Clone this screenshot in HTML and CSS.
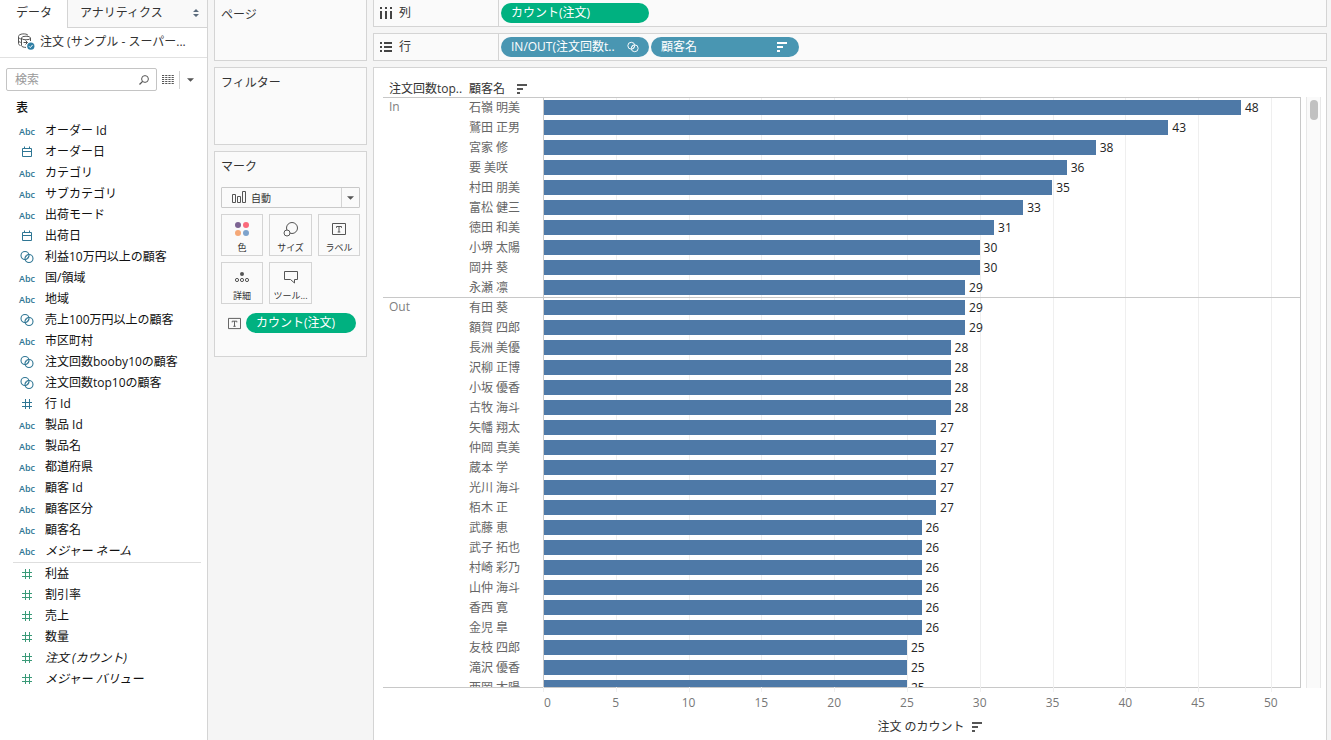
FILE: index.html
```html
<!DOCTYPE html>
<html lang="ja">
<head>
<meta charset="utf-8">
<meta name="viewport" content="width=device-width, initial-scale=1">
<title>注文回数 上位の顧客</title>
<link rel="stylesheet" href="styles.css">
</head>
<body>
<svg class="sprite" aria-hidden="true">
  <symbol id="i-date" viewBox="0 0 14 14"><path d="M2.500 3.500h9v8h-9zM2.500 6.500h9M4.500 1.500v2M9.500 1.500v2" fill="none" stroke="currentColor"/></symbol>
  <symbol id="i-set" viewBox="0 0 14 14"><g fill="none" stroke="currentColor" stroke-width="1.100"><circle cx="5" cy="5.500" r="4"/><circle cx="9" cy="8.500" r="4"/><path d="M5.300 7.600l2.200-2.600M6.600 9l2.400-3" stroke-width=".8"/></g></symbol>
  <symbol id="i-num" viewBox="0 0 14 14"><path d="M5.500 2v10M9.500 2v10M2 5.500h10M2 9.500h10" fill="none" stroke="currentColor"/></symbol>
  <symbol id="i-sort" viewBox="0 0 10 10"><path d="M0 1h10M0 5h6M0 9h3" fill="none" stroke="currentColor" stroke-width="2"/></symbol>
  <symbol id="i-text" viewBox="0 0 14 14"><path d="M.5 1.500h13v11h-13z" fill="none" stroke="currentColor"/><path d="M4.500 5.800v-1.300h5v1.300M7 4.500v5.500M5.700 10h2.600" fill="none" stroke="currentColor"/></symbol>
  <symbol id="i-down" viewBox="0 0 8 4"><path d="M0 0h8l-4 4z" fill="currentColor"/></symbol>
</svg>
<div class="app">
  <aside class="sidebar">
    <div class="tabs">
      <button class="tab active" type="button">データ</button>
      <button class="tab" type="button">アナリティクス
        <svg width="6" height="8" viewBox="0 0 6 8"><path d="M0 3h6l-3-3zM0 5h6l-3 3z" fill="#5b6b7c"/></svg>
      </button>
    </div>
    <div class="source">
      <svg width="18" height="18" viewBox="0 0 18 18"><g fill="none" stroke="#555"><path d="M2.500 12.500c-1.300-.4-2-1-2-2v-7c0-3 8-3.500 9.500-1.200M.7 4.500c.5 1 1.500 1.400 2.800 1.500M.6 8c.5 1 1.400 1.300 2.300 1.400"/><ellipse cx="8" cy="5" rx="4.500" ry="1.800"/><path d="M3.500 5v7.500c0 1.200 2.200 1.900 4.500 1.900M12.500 5v3M5.500 9.500h4M7.500 7.500l2 2-2 2"/></g><circle cx="12.800" cy="13.200" r="4.200" fill="#fff"/><circle cx="12.800" cy="13.200" r="3.600" fill="#2f7fa5"/><path d="M11 13.300l1.300 1.300 2.300-2.700" fill="none" stroke="#fff"/></svg>
      <span>注文 (サンプル - スーパー...</span>
    </div>
    <div class="search-row">
      <label class="search">
        <input type="text" placeholder="検索" aria-label="検索">
        <svg width="10" height="10" viewBox="0 0 10 10"><circle cx="6" cy="4" r="3.400" fill="none" stroke="#555"/><path d="M3.600 6.400l-3.100 3.100" stroke="#555" stroke-width="1.300"/></svg>
      </label>
      <button class="plain view" type="button" aria-label="表示"><svg width="12" height="9" viewBox="0 0 12 9"><path d="M0 .5h12M0 2.500h12M0 4.500h12M0 6.500h12M0 8.500h12" stroke="#555" stroke-dasharray="2.200 1" stroke-width="1"/></svg></button>
      <button class="plain more" type="button" aria-label="メニュー"><svg width="7" height="4"><use href="#i-down"/></svg></button>
    </div>
    <h2 class="group-title">表</h2>
    <ul class="fields">
      <li><b>Abc</b>オーダー Id</li>
      <li><svg><use href="#i-date"/></svg>オーダー日</li>
      <li><b>Abc</b>カテゴリ</li>
      <li><b>Abc</b>サブカテゴリ</li>
      <li><b>Abc</b>出荷モード</li>
      <li><svg><use href="#i-date"/></svg>出荷日</li>
      <li><svg><use href="#i-set"/></svg>利益10万円以上の顧客</li>
      <li><b>Abc</b>国/領域</li>
      <li><b>Abc</b>地域</li>
      <li><svg><use href="#i-set"/></svg>売上100万円以上の顧客</li>
      <li><b>Abc</b>市区町村</li>
      <li><svg><use href="#i-set"/></svg>注文回数booby10の顧客</li>
      <li><svg><use href="#i-set"/></svg>注文回数top10の顧客</li>
      <li><svg><use href="#i-num"/></svg>行 Id</li>
      <li><b>Abc</b>製品 Id</li>
      <li><b>Abc</b>製品名</li>
      <li><b>Abc</b>都道府県</li>
      <li><b>Abc</b>顧客 Id</li>
      <li><b>Abc</b>顧客区分</li>
      <li><b>Abc</b>顧客名</li>
      <li><b>Abc</b><em>メジャー ネーム</em></li>
    </ul>
    <ul class="fields measures">
      <li><svg><use href="#i-num"/></svg>利益</li>
      <li><svg><use href="#i-num"/></svg>割引率</li>
      <li><svg><use href="#i-num"/></svg>売上</li>
      <li><svg><use href="#i-num"/></svg>数量</li>
      <li><svg><use href="#i-num"/></svg><em>注文 (カウント)</em></li>
      <li><svg><use href="#i-num"/></svg><em>メジャー バリュー</em></li>
    </ul>
  </aside>

  <section class="cards">
    <div class="card pages"><h2>ページ</h2></div>
    <div class="card filters"><h2>フィルター</h2></div>
    <div class="card marks">
      <h2>マーク</h2>
      <div class="mark-type">
        <svg class="bars-icon" width="14" height="12" viewBox="0 0 14 12"><path d="M.5 3.500h3v8h-3zM5.500 5.500h3v6h-3zM10.500 .5h3v11h-3z" fill="none" stroke="#555"/></svg>
        <select aria-label="マークの種類"><option>自動</option></select>
        <span class="arrow"><svg width="7" height="4"><use href="#i-down"/></svg></span>
      </div>
      <div class="mark-grid">
        <button type="button"><svg width="16" height="16" viewBox="0 0 16 16"><circle cx="4" cy="4" r="3" fill="#7d6493"/><circle cx="12" cy="4" r="3" fill="#fb6a7b"/><circle cx="4" cy="12" r="3" fill="#f5a877"/><circle cx="12" cy="12" r="3" fill="#7da3cc"/></svg>色</button>
        <button type="button"><svg width="16" height="16" viewBox="0 0 16 16"><g fill="#fafafa" stroke="#555"><circle cx="9" cy="7" r="5.500"/><circle cx="4" cy="12" r="3"/></g></svg>サイズ</button>
        <button type="button"><svg width="14" height="16"><use href="#i-text"/></svg>ラベル</button>
        <button type="button"><svg width="16" height="16" viewBox="0 0 16 16"><circle cx="8" cy="5" r="2" fill="#555"/><g fill="none" stroke="#555"><circle cx="3" cy="11" r="1.600"/><circle cx="8" cy="11" r="1.600"/><circle cx="13" cy="11" r="1.600"/></g></svg>詳細</button>
        <button type="button"><svg width="16" height="16" viewBox="0 0 16 16"><path d="M1.500 2.500h13v8h-3v3.500l-4-3.500h-6z" fill="none" stroke="#555"/></svg>ツール...</button>
      </div>
      <div class="mark-pill">
        <svg width="13" height="13"><use href="#i-text"/></svg>
        <button class="pill green" type="button"><span>カウント(注文)</span></button>
      </div>
    </div>
  </section>

  <main class="work">
    <div class="shelf columns">
      <h2><svg width="12" height="12" viewBox="0 0 12 12"><path d="M1 0v2M1 4v8M6 0v2M6 4v8M11 0v2M11 4v8" stroke="#444" stroke-width="2"/></svg>列</h2>
      <div class="pills"><button class="pill green" type="button"><span>カウント(注文)</span></button></div>
    </div>
    <div class="shelf rows">
      <h2><svg width="12" height="12" viewBox="0 0 12 12"><path d="M0 2h2M4 2h8M0 6h2M4 6h8M0 10h2M4 10h8" stroke="#444" stroke-width="2"/></svg>行</h2>
      <div class="pills">
        <button class="pill blue" type="button"><span>IN/OUT(注文回数t..</span><svg width="12" height="12"><use href="#i-set"/></svg></button>
        <button class="pill blue name" type="button"><span>顧客名</span><svg width="10" height="10"><use href="#i-sort"/></svg></button>
      </div>
    </div>
    <div class="sheet">
      <div class="heads"><span>注文回数top..</span><span>顧客名</span><svg width="10" height="10"><use href="#i-sort"/></svg></div>
      <div class="plot-row">
        <div class="plot">
          <div class="gridlines"><i></i><i></i><i></i><i></i><i></i><i></i><i></i><i></i><i></i><i></i><i></i></div>
          <div class="viewport">
            <table>
              <colgroup><col class="c-set"><col class="c-name"><col></colgroup>
              <tbody>
                <tr><th rowspan="10" scope="rowgroup">In</th><td>石嶺 明美</td><td class="v"><div><i style="--v:48"></i>48</div></td></tr>
                <tr><td>鷲田 正男</td><td class="v"><div><i style="--v:43"></i>43</div></td></tr>
                <tr><td>宮家 修</td><td class="v"><div><i style="--v:38"></i>38</div></td></tr>
                <tr><td>要 美咲</td><td class="v"><div><i style="--v:36"></i>36</div></td></tr>
                <tr><td>村田 朋美</td><td class="v"><div><i style="--v:35"></i>35</div></td></tr>
                <tr><td>富松 健三</td><td class="v"><div><i style="--v:33"></i>33</div></td></tr>
                <tr><td>徳田 和美</td><td class="v"><div><i style="--v:31"></i>31</div></td></tr>
                <tr><td>小堺 太陽</td><td class="v"><div><i style="--v:30"></i>30</div></td></tr>
                <tr><td>岡井 葵</td><td class="v"><div><i style="--v:30"></i>30</div></td></tr>
                <tr><td>永瀬 凛</td><td class="v"><div><i style="--v:29"></i>29</div></td></tr>
              </tbody>
              <tbody>
                <tr><th rowspan="20" scope="rowgroup">Out</th><td>有田 葵</td><td class="v"><div><i style="--v:29"></i>29</div></td></tr>
                <tr><td>額賀 四郎</td><td class="v"><div><i style="--v:29"></i>29</div></td></tr>
                <tr><td>長洲 美優</td><td class="v"><div><i style="--v:28"></i>28</div></td></tr>
                <tr><td>沢柳 正博</td><td class="v"><div><i style="--v:28"></i>28</div></td></tr>
                <tr><td>小坂 優香</td><td class="v"><div><i style="--v:28"></i>28</div></td></tr>
                <tr><td>古牧 海斗</td><td class="v"><div><i style="--v:28"></i>28</div></td></tr>
                <tr><td>矢幡 翔太</td><td class="v"><div><i style="--v:27"></i>27</div></td></tr>
                <tr><td>仲岡 真美</td><td class="v"><div><i style="--v:27"></i>27</div></td></tr>
                <tr><td>蔵本 学</td><td class="v"><div><i style="--v:27"></i>27</div></td></tr>
                <tr><td>光川 海斗</td><td class="v"><div><i style="--v:27"></i>27</div></td></tr>
                <tr><td>栢木 正</td><td class="v"><div><i style="--v:27"></i>27</div></td></tr>
                <tr><td>武藤 恵</td><td class="v"><div><i style="--v:26"></i>26</div></td></tr>
                <tr><td>武子 拓也</td><td class="v"><div><i style="--v:26"></i>26</div></td></tr>
                <tr><td>村崎 彩乃</td><td class="v"><div><i style="--v:26"></i>26</div></td></tr>
                <tr><td>山仲 海斗</td><td class="v"><div><i style="--v:26"></i>26</div></td></tr>
                <tr><td>香西 寛</td><td class="v"><div><i style="--v:26"></i>26</div></td></tr>
                <tr><td>金児 皐</td><td class="v"><div><i style="--v:26"></i>26</div></td></tr>
                <tr><td>友枝 四郎</td><td class="v"><div><i style="--v:25"></i>25</div></td></tr>
                <tr><td>滝沢 優香</td><td class="v"><div><i style="--v:25"></i>25</div></td></tr>
                <tr><td>西岡 太陽</td><td class="v"><div><i style="--v:25"></i>25</div></td></tr>
              </tbody>
            </table>
          </div>
        </div>
        <div class="scrollbar"><div class="thumb"></div></div>
      </div>
      <div class="axis">
        <div class="ticks"><span>0</span><span>5</span><span>10</span><span>15</span><span>20</span><span>25</span><span>30</span><span>35</span><span>40</span><span>45</span><span>50</span></div>
        <div class="axis-title">注文 のカウント<svg width="10" height="10"><use href="#i-sort"/></svg></div>
      </div>
    </div>
  </main>
</div>
</body>
</html>
```
FILE: styles.css
```css
* { box-sizing: border-box; }

body {
  margin: 0;
  background: #f5f5f5;
  color: #333;
  font: 12px/20px "Open Sans", "Noto Sans CJK JP", sans-serif;
}

h2 { margin: 0; font-size: 12px; font-weight: 400; }
ul { list-style: none; margin: 0; padding: 0; }
button, input, select { font: inherit; color: inherit; }
button { cursor: pointer; }
svg { flex: none; }
.sprite { position: absolute; width: 0; height: 0; }

.app {
  display: grid;
  grid-template-columns: 208px 153px minmax(0, 1fr);
  grid-template-rows: minmax(0, 1fr);
  column-gap: 6px;
  height: 100vh;
  padding-right: 4px;
  overflow: hidden;
}

/* Data pane */
.sidebar { background: #fff; border-right: 1px solid #d4d4d4; }
.tabs { display: flex; height: 28px; }
.tab {
  display: flex;
  flex: 1;
  align-items: center;
  justify-content: space-between;
  padding: 0 8px 2px 12px;
  border: 0;
  border-left: 1px solid #d4d4d4;
  border-bottom: 1px solid #d4d4d4;
  background: #f9f9f9;
}
.tab.active { flex: 0 0 67px; padding-left: 16px; border-color: transparent; border-left: 0; background: #fff; }

.source {
  display: flex;
  align-items: center;
  gap: 4px;
  height: 30px;
  padding: 0 8px 2px 18px;
  border-bottom: 1px solid #e1e1e1;
  white-space: nowrap;
}

.search-row { display: flex; align-items: center; padding: 10px 6px 0; }
.search {
  display: flex;
  align-items: center;
  width: 151px;
  height: 23px;
  padding: 0 7px 0 8px;
  border: 1px solid #c4c4c4;
  border-radius: 2px;
}
.search input { flex: 1; min-width: 0; padding: 0; border: 0; outline: 0; background: none; }
.search input::placeholder { color: #999; opacity: 1; }
.plain { display: flex; align-items: center; height: 18px; padding: 0; border: 0; background: none; color: #555; }
.view { padding: 0 5px; }
.more { padding-left: 7px; border-left: 1px solid #d4d4d4; }

.group-title { padding: 7px 16px 2px; color: #111; font-weight: 500; }
.fields { color: #111; }
.fields li { display: flex; align-items: center; height: 21px; padding-left: 19px; white-space: nowrap; }
.fields b { width: 26px; padding-top: 2px; color: #2f7694; font-size: 9px; font-weight: 600; }
.fields svg { width: 16px; height: 14px; margin-right: 10px; color: #2f7694; }
.measures { margin: 1px 6px 0 13px; border-top: 1px solid #dedede; }
.measures li { padding-left: 6px; }
.measures svg { color: #3a9a78; }

/* Cards */
.cards { display: flex; flex-direction: column; gap: 6px; }
.card { padding: 5px 6px; border: 1px solid #d4d4d4; background: #fafafa; }
.pages { height: 61px; border-top: 0; }
.filters { height: 78px; }
.marks { height: 206px; }
.mark-type { display: flex; position: relative; height: 21px; margin-top: 10px; border: 1px solid #c9c9c9; border-radius: 1px; }
.bars-icon { position: absolute; left: 10px; top: 3px; }
.mark-type select {
  width: 100%;
  padding: 0 20px 0 29px;
  border: 0;
  background: none;
  appearance: none;
  font-size: 10px;
}
.arrow {
  display: flex;
  position: absolute;
  inset: 0 0 0 auto;
  align-items: center;
  justify-content: center;
  width: 18px;
  border-left: 1px solid #d4d4d4;
  color: #555;
  pointer-events: none;
}
.mark-grid { display: grid; grid-template-columns: 42px 43px 42px; gap: 6px; justify-content: space-between; margin-top: 6px; }
.mark-grid button {
  display: flex;
  flex-direction: column;
  align-items: center;
  gap: 5px;
  height: 42px;
  padding: 6px 0 0;
  border: 1px solid #d4d4d4;
  background: #fafafa;
  color: #333;
  font-size: 9px;
  line-height: 12px;
}
.mark-grid svg { color: #555; }
.mark-pill { display: flex; align-items: center; gap: 5px; margin-top: 9px; padding: 0 3px 0 7px; color: #555; }

.pill {
  display: flex;
  align-items: center;
  justify-content: space-between;
  width: 148px;
  height: 20px;
  padding: 0 10px;
  border: 0;
  border-radius: 10px;
  color: #fff;
  line-height: 18px;
  white-space: nowrap;
}
.pill span { padding-bottom: 1px; }
.pill.green { background: #00b180; }
.pill.blue { background: #4996b2; }
.pill.name { padding-right: 12px; }
.mark-pill .pill { width: 110px; }

/* Shelves */
.work { display: flex; flex-direction: column; gap: 6px; min-width: 0; }
.shelf { display: flex; flex: none; height: 28px; border: 1px solid #d4d4d4; background: #fafafa; }
.columns { height: 27px; border-top: 0; }
.shelf h2 { display: flex; align-items: center; gap: 7px; width: 125px; padding: 0 0 1px 6px; border-right: 1px solid #d4d4d4; }
.pills { display: flex; align-items: center; gap: 2px; padding-left: 2px; }

/* Worksheet */
.sheet {
  display: flex;
  flex: 1;
  flex-direction: column;
  min-height: 0;
  padding-left: 9px;
  border: 1px solid #d4d4d4;
  border-bottom: 0;
  background: #fff;
}
.heads { display: flex; flex: none; align-items: center; height: 29px; padding: 12px 0 0 6px; }
.heads span:first-child { width: 80px; }
.heads svg, .axis-title svg { color: #555; }
.heads svg { margin-left: 12px; }
.plot-row { display: flex; flex: 1; min-height: 0; gap: 5px; padding-right: 5px; }
.plot { position: relative; flex: 1; min-width: 0; border-bottom: 1px solid #c8c8c8; }
.viewport { position: relative; height: 100%; overflow: hidden; border-right: 1px solid #c8c8c8; }

.gridlines, .ticks { display: grid; grid-template-columns: repeat(10, minmax(0, 5fr)) minmax(0, 2fr); }
.gridlines { position: absolute; inset: 0 1px -5px 160px; }
.gridlines i { border-left: 1px solid #efefef; }

table { width: 100%; border-spacing: 0; table-layout: fixed; color: #666; }
.c-set { width: 86px; }
.c-name { width: 74px; }
th, td {
  height: 20px;
  padding: 2px 0 0;
  font-weight: 400;
  line-height: 18px;
  text-align: left;
  vertical-align: top;
  white-space: nowrap;
}
th { padding: 1px 0 0 6px; color: #808080; }
tbody tr:first-child > * { box-shadow: inset 0 1px #c8c8c8; }
.v { padding: 0 1px 0 0; border-left: 1px solid #c8c8c8; }
.v div { display: flex; gap: 4px; height: 20px; color: #222; line-height: 22px; }
.v i { width: calc(var(--v) / 52 * 100%); height: 15px; margin-top: 3px; background: #4e79a7; }

.scrollbar { width: 15px; padding: 3px; border: 1px solid #e8e8e8; border-width: 0 1px; background: #fafafa; }
.thumb { width: 8px; height: 20px; border-radius: 4px; background: #c1c1c1; }

.axis { flex: none; height: 52px; padding: 5px 26px 0 160px; }
.ticks { color: #777; }
.ticks span { width: 40px; margin-left: -20px; text-align: center; }
.ticks span:first-child { margin-left: 1px; text-align: left; }
.axis-title { display: flex; align-items: center; justify-content: center; gap: 7px; padding: 4px 0 0 16px; }
```
